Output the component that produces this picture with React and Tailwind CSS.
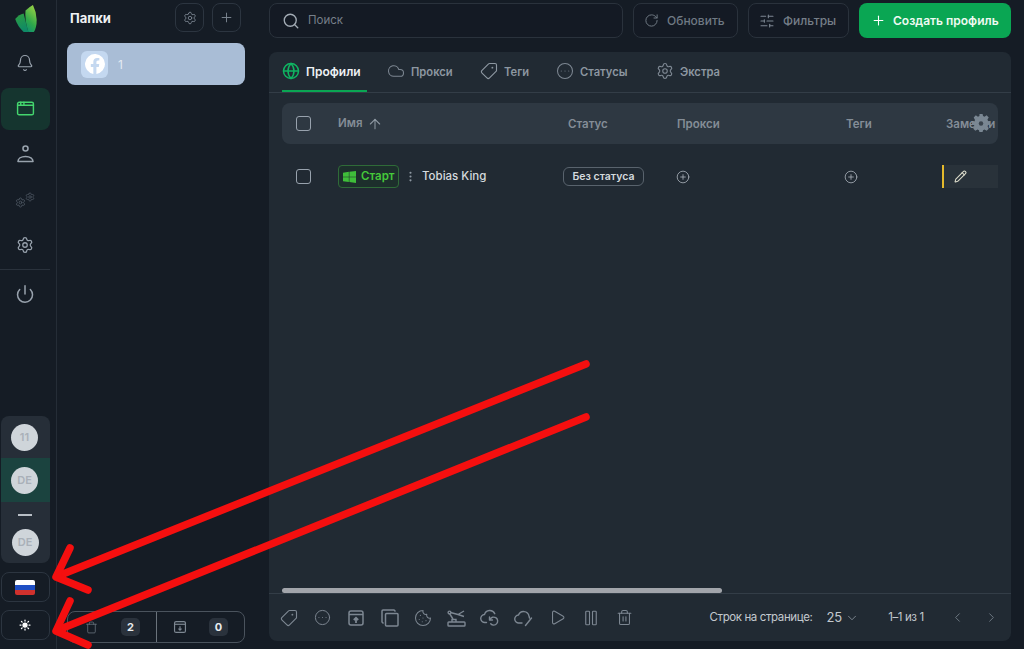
import {
  Bell,
  AppWindow,
  Power,
  Settings,
  Plus,
  Search,
  RotateCw,
  SlidersHorizontal,
  Globe,
  Cloud,
  Tag,
  CircleEllipsis,
  ArrowUp,
  EllipsisVertical,
  CirclePlus,
  Pencil,
  Cookie,
  Play,
  Pause,
  Trash2,
  ChevronDown,
  ChevronLeft,
  ChevronRight,
  Sun,
  Trash,
} from "lucide-react";

function Logo() {
  return (
    <svg width="23" height="28" viewBox="0 0 24 30">
      <defs>
        <linearGradient id="leafA" x1="0" y1="0" x2="0.3" y2="1">
          <stop offset="0" stopColor="#2f9e3f" />
          <stop offset="1" stopColor="#0f8a66" />
        </linearGradient>
        <linearGradient id="leafB" x1="0.6" y1="0" x2="0.2" y2="1">
          <stop offset="0" stopColor="#93cf45" />
          <stop offset="0.6" stopColor="#2fa84a" />
          <stop offset="1" stopColor="#0f8f70" />
        </linearGradient>
      </defs>
      <path d="M1 15 Q5 10 10 9 L15 29 L10 29 Q3 22 1 15Z" fill="url(#leafA)" />
      <path d="M12 6 Q16 2 20 0 Q24 8 24 16 Q24 24 21 29 L15 29 Q11 16 12 6Z" fill="url(#leafB)" />
    </svg>
  );
}

function UserIcon() {
  return (
    <svg width="17" height="18" viewBox="0 0 17 18" fill="none" stroke="#98a2ad" strokeWidth="1.6">
      <circle cx="8.500" cy="3.500" r="2.500" />
      <path d="M1 16.500c0-3 3-5 7.500-5s7.500 2 7.500 5z" strokeLinejoin="round" />
    </svg>
  );
}

function GearsIcon() {
  return (
    <div className="flex items-start text-[#4f5964]">
      <Settings size={11} strokeWidth={1.8} className="mt-[5px]" />
      <Settings size={10} strokeWidth={1.8} className="-ml-[1px]" />
    </div>
  );
}

function FacebookIcon() {
  return (
    <svg width="20" height="20" viewBox="0 0 24 24">
      <path
        fill="#fff"
        d="M24 12a12 12 0 1 0-14 11.850V15.500H7V12h3V9.400c0-3 1.800-4.700 4.500-4.700 1.300 0 2.700.2 2.700.2v3h-1.500c-1.500 0-2 .9-2 1.900V12h3.400l-.5 3.500h-2.900v8.350A12 12 0 0 0 24 12z"
      />
    </svg>
  );
}

function WindowsIcon() {
  return (
    <svg width="13" height="12" viewBox="0 0 12 11" fill="#3fbf3a">
      <path d="M0 1.500 5.400.7v4.500H0zM5.900.6 12 0v5.200H5.900zM0 5.700h5.400v4.500L0 9.500zM5.900 5.700H12V11l-6.100-.8z" />
    </svg>
  );
}

function ArchiveUp({ size = 18, down = false }) {
  return (
    <svg width={size} height={size} viewBox="0 0 18 18" fill="none" stroke="currentColor" strokeWidth="1.5">
      <rect x="2" y="2" width="14" height="14" rx="2" />
      <path d="M2 5.500h14" />
      {down ? (
        <path d="M9 8v5M7 11l2 2 2-2" />
      ) : (
        <path d="M9 14V9M6.800 11 9 8.800 11.200 11" strokeWidth="1.800" />
      )}
    </svg>
  );
}

function CopyIcon() {
  return (
    <svg width="18" height="18" viewBox="0 0 18 18" fill="none" stroke="currentColor" strokeWidth="1.5">
      <rect x="4.500" y="4.500" width="12.500" height="12.500" rx="1" />
      <path d="M2.500 14.500 1 13V2a1 1 0 0 1 1-1h11l1.500 1.500" />
    </svg>
  );
}

function RobotArm() {
  return (
    <svg width="19" height="19" viewBox="0 0 19 19" fill="none" stroke="currentColor" strokeWidth="1.4">
      <rect x="1" y="14" width="17" height="4" rx="0.8" />
      <path d="M5 14v-2.500h4V14" />
      <path d="M6 11 2.500 5.500" />
      <circle cx="2.500" cy="4.500" r="1.400" />
      <path d="M3.500 4.500 11 6.500M11 6.500 17 3M11 6.500l6 2" />
    </svg>
  );
}

function CloudSync() {
  return (
    <svg width="20" height="18" viewBox="0 0 20 18" fill="none" stroke="currentColor" strokeWidth="1.400" strokeLinecap="round" strokeLinejoin="round">
      <path d="M6.500 13.500H5a4 4 0 0 1-.5-8 5.500 5.500 0 0 1 10.300-.8" />
      <path d="M10 10.500a4 4 0 1 1 .7 4.300" />
      <path d="M9.500 8v3h3" />
    </svg>
  );
}

function CloudSlash() {
  return (
    <svg width="19" height="18" viewBox="0 0 19 18" fill="none" stroke="currentColor" strokeWidth="1.400" strokeLinecap="round" strokeLinejoin="round">
      <path d="M8 14H5a4 4 0 0 1-.5-8 5.500 5.500 0 0 1 10.500 1l.5 2" />
      <path d="M17.500 9 11.500 16.500" />
    </svg>
  );
}

function SideItem({ children, active }) {
  return (
    <div
      className={`h-[42px] w-[49px] ml-[1px] pr-[1px] flex items-center justify-center rounded-lg ${
        active ? "bg-[#15352f]" : ""
      }`}
    >
      {children}
    </div>
  );
}

function Avatar({ label }) {
  return (
    <div className="w-[27px] h-[27px] rounded-full bg-[#cfd5da] flex items-center justify-center text-[11px] font-semibold text-[#a9b0b8]">
      {label}
    </div>
  );
}

function Sidebar() {
  return (
    <aside className="w-[57px] shrink-0 h-full border-r border-[#252d37] flex flex-col">
      <div className="h-[39px] pt-[5px] pl-[14px] shrink-0">
        <Logo />
      </div>
      <div className="flex flex-col gap-[3.5px] mt-[3px]">
        <SideItem>
          <Bell size={18} strokeWidth={1.6} className="text-[#98a2ad]" />
        </SideItem>
        <SideItem active>
          <AppWindow size={19} strokeWidth={1.8} className="text-[#44d66e]" />
        </SideItem>
        <SideItem>
          <UserIcon />
        </SideItem>
        <SideItem>
          <GearsIcon />
        </SideItem>
        <SideItem>
          <Settings size={18} strokeWidth={1.7} className="text-[#98a2ad]" />
        </SideItem>
      </div>
      <div className="border-t border-[#2a323c] w-[50px] mt-[3px]" />
      <div className="mt-[3px]">
        <SideItem>
          <Power size={20} strokeWidth={1.8} className="text-[#98a2ad]" />
        </SideItem>
      </div>

      <div className="mt-auto ml-[1px] w-[49px] pr-[1px] h-[147px] rounded-lg bg-[#262e38] overflow-hidden flex flex-col items-center">
        <div className="h-[42px] shrink-0 w-[49px] flex items-center justify-center pr-[1px]">
          <Avatar label="11" />
        </div>
        <div className="h-[44px] shrink-0 w-[49px] bg-[#1b433f] flex items-center justify-center pr-[1px]">
          <Avatar label="DE" />
        </div>
        <div className="w-[14px] h-[2px] bg-[#b8bfc6] mt-[12px]" />
        <div className="mt-[13px]">
          <Avatar label="DE" />
        </div>
      </div>
      <div className="mt-[9px] ml-[1px] w-[49px] h-[30px] pr-[1px] rounded-lg border border-[#2c3540] flex items-center justify-center">
        <div className="w-[20px] h-[15px] rounded-[2px] overflow-hidden flex flex-col">
          <div className="flex-1 bg-white" />
          <div className="flex-1 bg-[#1f4fc4]" />
          <div className="flex-1 bg-[#d0312d]" />
        </div>
      </div>
      <div className="mt-[8px] mb-[9px] ml-[1px] w-[49px] h-[30px] pr-[1px] rounded-lg border border-[#2c3540] flex items-center justify-center">
        <Sun size={12} strokeWidth={2.5} className="text-white" fill="#fff" />
      </div>
    </aside>
  );
}

function Folders() {
  return (
    <section className="w-[212px] shrink-0 h-full pl-[10px] pr-[24px] flex flex-col">
      <div className="flex items-center h-[29px] mt-[3px]">
        <span className="ml-[3px] pt-[2px] text-[13px] font-bold text-[#eef1f4]">Папки</span>
        <div className="ml-auto flex gap-[8px] mr-[4px]">
          <div className="w-[29px] h-[29px] rounded-lg border border-[#2c3540] flex items-center justify-center">
            <Settings size={14} strokeWidth={1.5} className="text-[#7d8792]" />
          </div>
          <div className="w-[29px] h-[29px] rounded-lg border border-[#2c3540] flex items-center justify-center">
            <Plus size={15} strokeWidth={1.5} className="text-[#7d8792]" />
          </div>
        </div>
      </div>
      <div className="mt-[11px] h-[42px] w-[178px] rounded-lg bg-[#a9bdd6] flex items-center pl-[14px]">
        <div className="w-[27px] h-[27px] rounded-md bg-[#c4d8f0] flex items-center justify-center">
          <FacebookIcon />
        </div>
        <span className="ml-[10px] pt-[1px] text-[12px] text-[#e4ebf3]">1</span>
      </div>

      <div className="mt-auto mb-[6px] h-[32px] w-[178px] rounded-lg border border-[#4a535d] flex">
        <div className="w-[89px] border-r border-[#6a737c] flex items-center pl-[17px]">
          <Trash size={13} strokeWidth={1.4} className="text-[#6c7781]" />
          <div className="ml-[23px] w-[19px] h-[18px] rounded-[5px] bg-[#2a323c] flex items-center justify-center text-[11px] font-bold text-[#e8ebee]">
            2
          </div>
        </div>
        <div className="flex-1 flex items-center pl-[16px] text-[#7d8792]">
          <ArchiveUp size={14} down />
          <div className="ml-[22px] w-[19px] h-[18px] rounded-[5px] bg-[#2a323c] flex items-center justify-center text-[11px] font-bold text-[#e8ebee]">
            0
          </div>
        </div>
      </div>
    </section>
  );
}

function TopBar() {
  return (
    <div className="flex h-[35px] gap-[10px] shrink-0">
      <div className="w-[354px] rounded-lg border border-[#2a323c] bg-[#141a24] flex items-center pl-[12px]">
        <Search size={18} strokeWidth={1.8} className="text-[#a3acb5]" />
        <span className="ml-[8px] pt-[1px] text-[11.5px] text-[#767f89]">Поиск</span>
      </div>
      <div className="w-[105px] rounded-lg border border-[#2a323c] bg-[#141a24] flex items-center pl-[10px]">
        <RotateCw size={15} strokeWidth={1.6} className="text-[#6f7983]" />
        <span className="ml-[8px] pt-[1px] text-[12px] font-medium text-[#6f7983]">Обновить</span>
      </div>
      <div className="w-[101px] rounded-lg border border-[#2a323c] bg-[#141a24] flex items-center pl-[10px]">
        <SlidersHorizontal size={16} strokeWidth={1.6} className="text-[#7d8792]" />
        <span className="ml-[8px] pt-[1px] text-[12px] font-medium text-[#767f89]">Фильтры</span>
      </div>
      <div className="w-[152px] rounded-lg bg-[#0aa653] flex items-center pl-[12px]">
        <Plus size={15} strokeWidth={1.7} className="text-white" />
        <span className="ml-[7px] pt-[1px] text-[12px] font-semibold text-[#eefaf2] whitespace-nowrap">
          Создать профиль
        </span>
      </div>
    </div>
  );
}

function TabItem({ icon, label, active, width }) {
  return (
    <div
      className={`h-full flex items-center gap-[6px] border-b-2 ${width} ${
        active ? "border-[#0aa653] text-[#eef1f4]" : "border-transparent text-[#8d97a1]"
      }`}
    >
      {icon}
      <span className={`pt-[2px] font-semibold whitespace-nowrap ${active ? "text-[12px]" : "text-[11.200px]"}`}>
        {label}
      </span>
    </div>
  );
}

function Tabs() {
  return (
    <div className="h-[41px] shrink-0 border-b border-[#333d47] pl-[13px] flex">
      <TabItem
        active
        width="w-[85px] mr-[20px]"
        label="Профили"
        icon={<Globe size={18} strokeWidth={2} className="shrink-0 text-[#0fb562]" />}
      />
      <TabItem
        width="w-[66px] mr-[27px]"
        label="Прокси"
        icon={<Cloud size={18} strokeWidth={1.4} className="shrink-0 text-[#7d8792]" />}
      />
      <TabItem
        width="w-[49px] mr-[27px]"
        label="Теги"
        icon={<Tag size={18} strokeWidth={1.5} className="shrink-0 text-[#8d97a1] -scale-x-100" />}
      />
      <TabItem
        width="w-[73px] mr-[27px]"
        label="Статусы"
        icon={<CircleEllipsis size={18} strokeWidth={1.4} className="shrink-0 text-[#7d8792]" />}
      />
      <TabItem
        width="w-[64px]"
        label="Экстра"
        icon={<Settings size={18} strokeWidth={1.5} className="shrink-0 text-[#7d8792]" />}
      />
    </div>
  );
}

function Checkbox() {
  return <div className="w-[15px] h-[15px] rounded-[3px] border-[1.5px] border-[#98a2ad]" />;
}

const gridCols = "grid grid-cols-[56px_225px_114px_169px_96px_56px] items-center";

function Table() {
  return (
    <div className="flex-1 min-h-0 flex flex-col relative">
      <div className={`${gridCols} mt-[10px] mx-[13px] h-[41px] rounded-lg bg-[#2e3842] text-[11.500px] font-semibold text-[#848d97]`}>
        <div className="pl-[14px]">
          <Checkbox />
        </div>
        <div className="flex items-center gap-[5px] pt-[1px]">
          <span>Имя</span>
          <ArrowUp size={16} strokeWidth={1.6} className="text-[#8d97a1]" />
        </div>
        <div className="pl-[5px] pt-[2px]">Статус</div>
        <div className="pt-[2px]">Прокси</div>
        <div className="pt-[2px]">Теги</div>
        <div className="pl-[4px] pt-[2px] whitespace-nowrap overflow-hidden">Заметки</div>
      </div>
      {/* шестерёнка поверх заголовка */}
      <svg
        className="absolute left-[703px] top-[21px]"
        width="18"
        height="18"
        viewBox="0 0 24 24"
        fill="#7a8793"
      >
        <path d="M10 1h4l.7 3.200 2 .8L19.500 3.300l2.800 2.800-1.700 2.800.8 2 3.200.7v4l-3.200.7-.8 2 1.700 2.800-2.800 2.800-2.800-1.700-2 .8-.7 3.200h-4l-.7-3.200-2-.8-2.800 1.700-2.800-2.800 1.700-2.800-.8-2L0 16.300v-4l3.200-.7.8-2L2.300 6.100 5.100 3.300 7.900 5l2-.8z" transform="translate(0 -1.500)" />
        <circle cx="12" cy="12.800" r="3" fill="#3a444e" />
      </svg>

      <div className={`${gridCols} mt-[21px] mx-[13px] h-[23px]`}>
        <div className="pl-[14px]">
          <Checkbox />
        </div>
        <div className="flex items-center">
          <div className="h-[23px] w-[61px] rounded-[4px] border border-[#2f6b38] bg-[#1d2f2c] flex items-center pl-[4px] gap-[5px]">
            <WindowsIcon />
            <span className="pt-[1px] text-[11.500px] font-semibold text-[#45c93a]">Старт</span>
          </div>
          <EllipsisVertical size={13} strokeWidth={2} className="ml-[5px] text-[#8d97a1]" />
          <span className="ml-[5px] pt-[1px] text-[11.500px] font-medium text-[#d5dade] whitespace-nowrap">Tobias King</span>
        </div>
        <div>
          <div className="w-[81px] h-[19px] rounded-md border border-[#59636d] flex items-center justify-center text-[10.500px] font-semibold text-[#d5dade]">
            Без статуса
          </div>
        </div>
        <div className="-ml-[1px]">
          <CirclePlus size={14} strokeWidth={1.4} className="text-[#aab2ba]" />
        </div>
        <div className="-ml-[2px]">
          <CirclePlus size={14} strokeWidth={1.4} className="text-[#aab2ba]" />
        </div>
        <div className="h-[23px] flex items-center bg-[#29323a] border-l-2 border-[#e4b92c] pl-[10px]">
          <Pencil size={13} strokeWidth={2} className="text-[#dcdccb]" />
        </div>
      </div>

      <div className="mt-auto ml-[13px] w-[440px] h-[5px] rounded-full bg-[#a2a5ab]" />
    </div>
  );
}

const actions = [
  <Tag key="tag" size={18} strokeWidth={1.5} className="-scale-x-100" />,
  <CircleEllipsis key="status" size={17} strokeWidth={1.4} />,
  <ArchiveUp key="archive" size={18} />,
  <CopyIcon key="copy" />,
  <Cookie key="cookie" size={18} strokeWidth={1.4} />,
  <RobotArm key="robot" />,
  <CloudSync key="sync" />,
  <CloudSlash key="off" />,
  <Play key="play" size={17} strokeWidth={1.5} />,
  <Pause key="pause" size={18} strokeWidth={1.5} />,
  <Trash2 key="trash" size={17} strokeWidth={1.5} />,
];

function Footer() {
  return (
    <div className="h-[48px] shrink-0 border-t border-[#333d47] flex items-center pl-[3px]">
      <div className="flex text-[#7d8792]">
        {actions.map((icon) => (
          <div key={icon.key} className="w-[33.600px] flex items-center justify-center">
            {icon}
          </div>
        ))}
      </div>
      <span className="ml-[68px] text-[11.500px] tracking-[-0.4px] text-[#c3c9ce] whitespace-nowrap">Строк на странице:</span>
      <span className="ml-[14px] text-[13px] text-[#c3c9ce]">25</span>
      <ChevronDown size={14} strokeWidth={1.4} className="ml-[3px] text-[#8d97a1]" />
      <span className="ml-[29px] text-[11.500px] tracking-[-0.4px] text-[#c3c9ce] whitespace-nowrap">1–1 из 1</span>
      <ChevronLeft size={15} strokeWidth={1.6} className="ml-[26px] text-[#6c7781]" />
      <ChevronRight size={15} strokeWidth={1.6} className="ml-[19px] text-[#6c7781]" />
    </div>
  );
}

function Arrows() {
  return (
    <svg
      className="absolute inset-0 pointer-events-none"
      width="1024"
      height="649"
      viewBox="0 0 1024 649"
      fill="none"
      stroke="#f50f0f"
      strokeWidth="7.500"
      strokeLinecap="round"
      strokeLinejoin="round"
    >
      <path d="M586 364 58 576" />
      <path d="M70 548 56 577 88 590" />
      <path d="M586 417 58 630" />
      <path d="M70 601 56 631 88 645" />
    </svg>
  );
}

export default function App() {
  return (
    <div
      className="relative w-[1024px] h-[649px] overflow-hidden flex bg-[#151c25]"
      style={{ fontFamily: "Inter, 'Noto Sans', sans-serif" }}
    >
      <Sidebar />
      <Folders />
      <main className="w-[742px] shrink-0 h-full pt-[3px] flex flex-col">
        <TopBar />
        <div className="mt-[14px] h-[589px] rounded-lg bg-[#212a33] flex flex-col overflow-hidden">
          <Tabs />
          <Table />
          <Footer />
        </div>
      </main>
      <Arrows />
    </div>
  );
}
